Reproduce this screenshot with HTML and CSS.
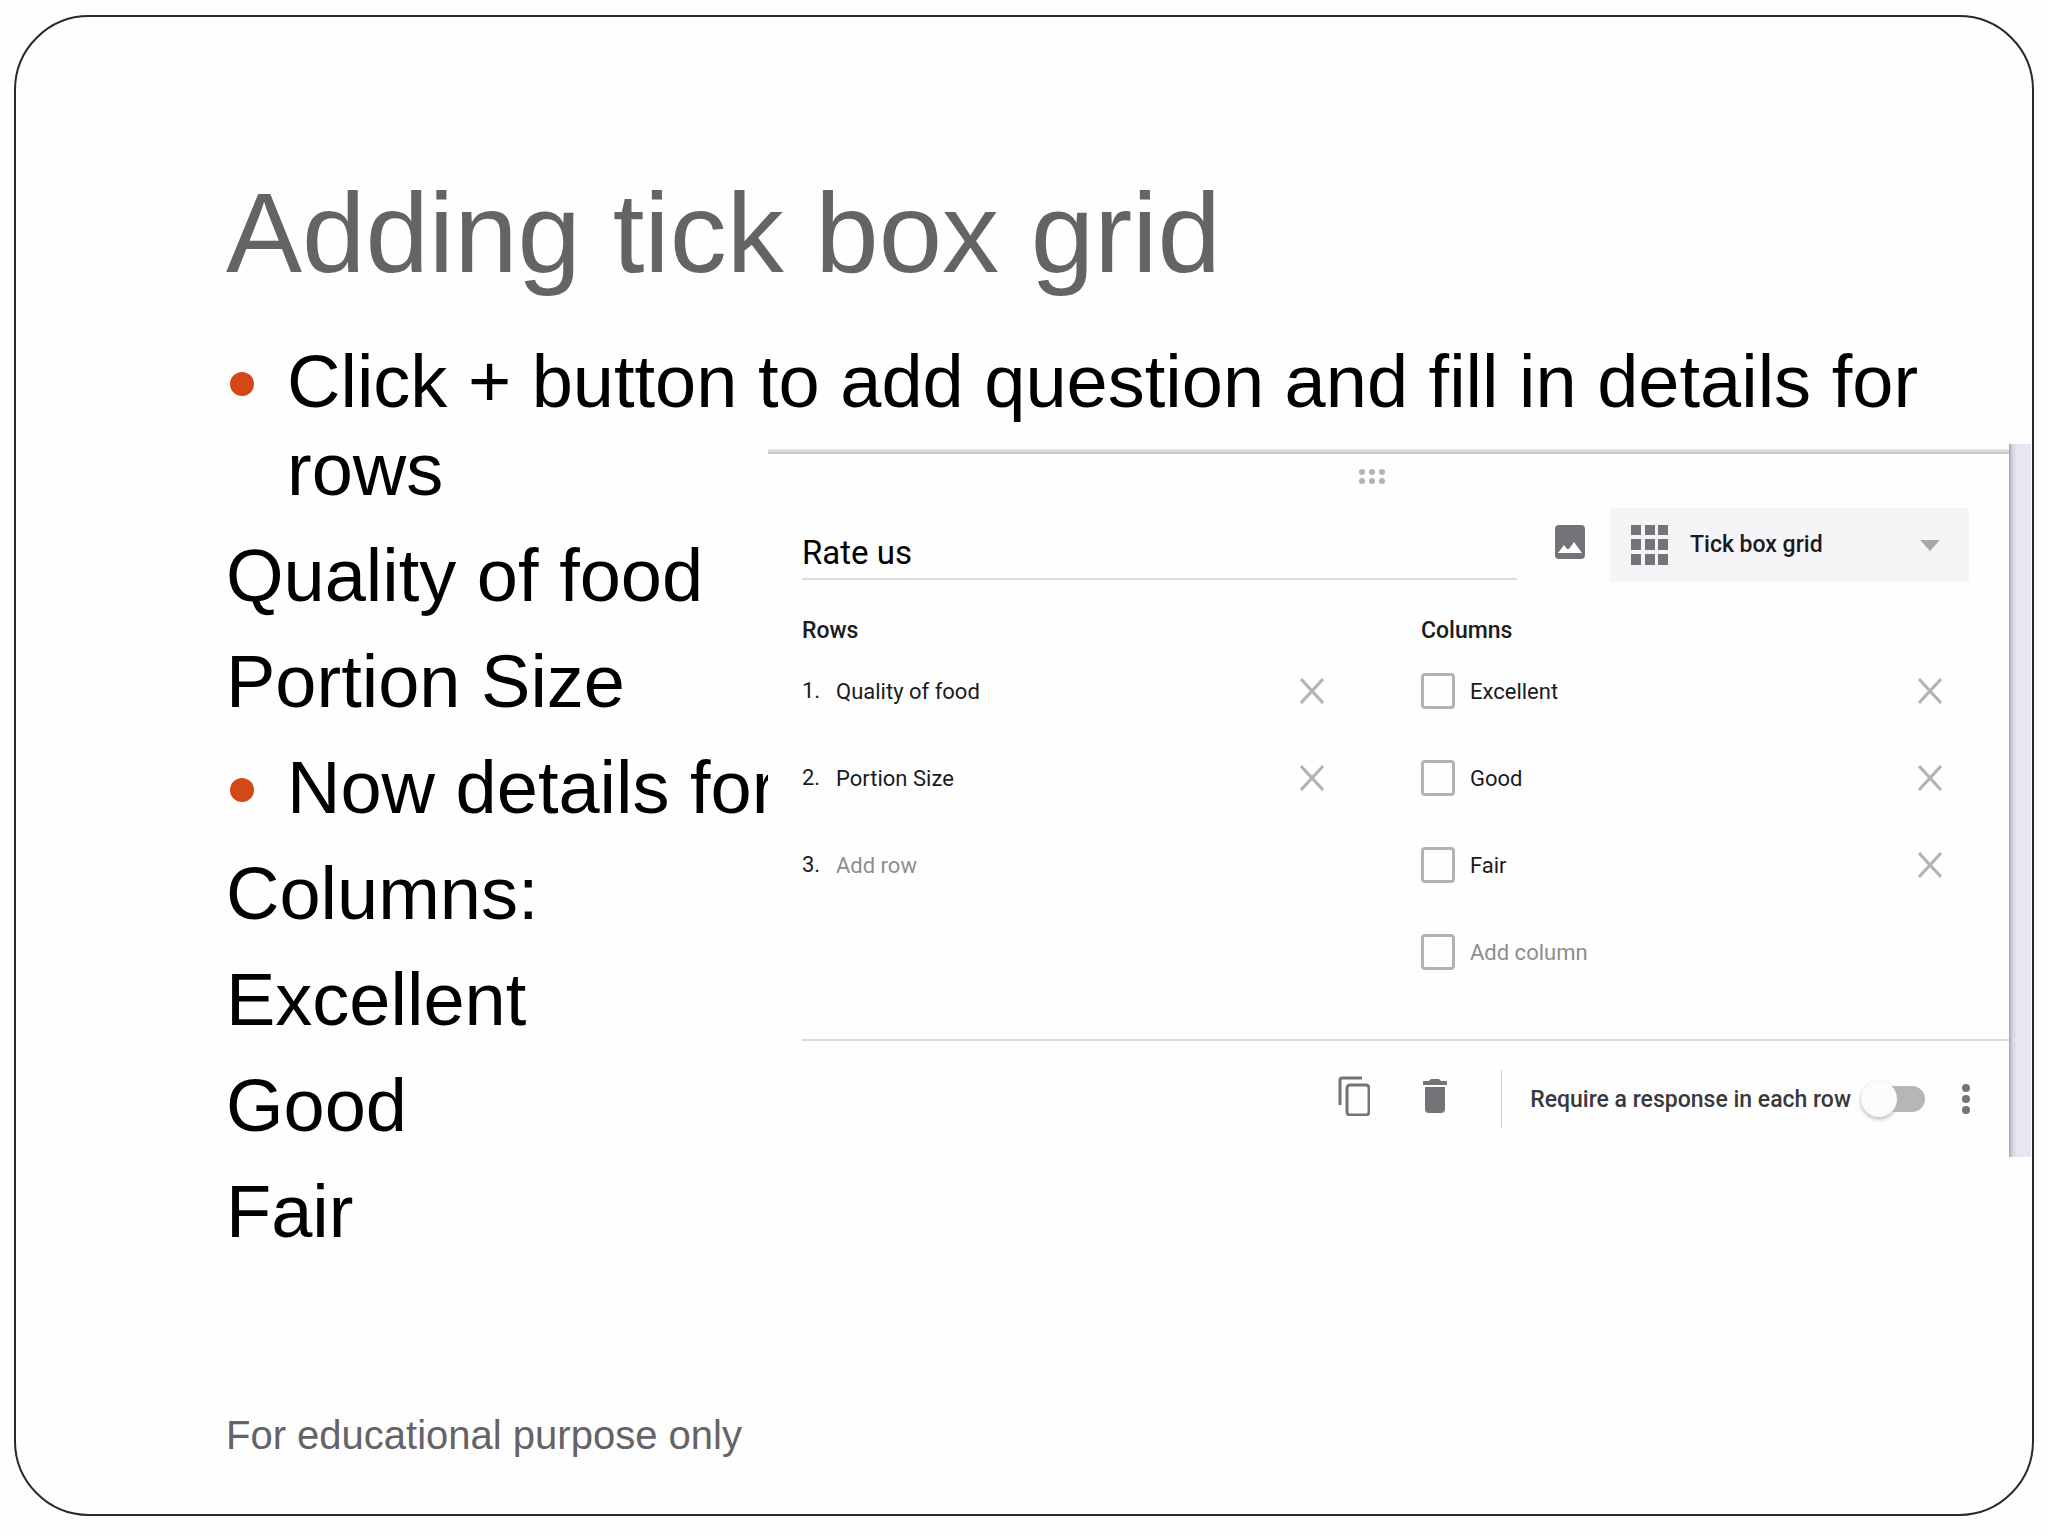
FILE: index.html
```html
<!DOCTYPE html>
<html lang="en">
<head>
<meta charset="utf-8">
<title>Adding tick box grid</title>
<link rel="stylesheet" href="styles.css">
</head>
<body>
<svg class="sprite" aria-hidden="true">
  <symbol id="cross" viewBox="0 0 24 26"><path d="M1 1 L23 25 M23 1 L1 25" fill="none" stroke="#b4b2b5" stroke-width="3"/></symbol>
</svg>
<main class="slide">
  <h1 class="title">Adding tick box grid</h1>
  <div class="points">
    <p class="bullet">Click + button to add question and fill in details for rows</p>
    <p>Quality of food</p>
    <p>Portion Size</p>
    <p class="bullet">Now details for</p>
    <p>Columns:</p>
    <p>Excellent</p>
    <p>Good</p>
    <p>Fair</p>
  </div>
  <footer class="note">For educational purpose only</footer>

  <form class="shot">
    <div class="card">
      <div class="handle">
        <svg width="26" height="16" viewBox="0 0 26 16" fill="#b4b2b5"><circle cx="3" cy="3" r="3"/><circle cx="13" cy="3" r="3"/><circle cx="23" cy="3" r="3"/><circle cx="3" cy="12" r="3"/><circle cx="13" cy="12" r="3"/><circle cx="23" cy="12" r="3"/></svg>
      </div>
      <div class="head">
        <input class="question" type="text" value="Rate us" aria-label="Question">
        <button class="icon image" type="button" aria-label="Add image">
          <svg width="30" height="34" viewBox="0 0 30 34"><rect width="30" height="34" rx="4" fill="#757377"/><path d="M3 28 L9 20 L12 24 L14 24 L19 17 L27 28 Z" fill="#fff"/></svg>
        </button>
        <label class="type">
          <svg width="37" height="40" viewBox="0 0 37 40" fill="#757377"><path d="M0 0h10v10H0zM14 0h10v10H14zM27 0h10v10H27zM0 14h10v11H0zM14 14h10v11H14zM27 14h10v11H27zM0 29h10v11H0zM14 29h10v11H14zM27 29h10v11H27z"/></svg>
          <select aria-label="Question type"><option>Tick box grid</option></select>
          <svg width="20" height="11" viewBox="0 0 20 11"><path d="M0 0h20L10 11z" fill="#a9a7aa"/></svg>
        </label>
      </div>
      <div class="fields">
        <section class="rows">
          <h2>Rows</h2>
          <div class="item"><span class="num">1.</span><input type="text" value="Quality of food" aria-label="Row 1"><button class="icon" type="button" aria-label="Remove row 1"><svg width="24" height="26"><use href="#cross"/></svg></button></div>
          <div class="item"><span class="num">2.</span><input type="text" value="Portion Size" aria-label="Row 2"><button class="icon" type="button" aria-label="Remove row 2"><svg width="24" height="26"><use href="#cross"/></svg></button></div>
          <div class="item"><span class="num">3.</span><input type="text" placeholder="Add row" aria-label="Row 3"></div>
        </section>
        <section class="columns">
          <h2>Columns</h2>
          <div class="item"><input type="checkbox" aria-label="Excellent"><input type="text" value="Excellent" aria-label="Column 1"><button class="icon" type="button" aria-label="Remove column 1"><svg width="24" height="26"><use href="#cross"/></svg></button></div>
          <div class="item"><input type="checkbox" aria-label="Good"><input type="text" value="Good" aria-label="Column 2"><button class="icon" type="button" aria-label="Remove column 2"><svg width="24" height="26"><use href="#cross"/></svg></button></div>
          <div class="item"><input type="checkbox" aria-label="Fair"><input type="text" value="Fair" aria-label="Column 3"><button class="icon" type="button" aria-label="Remove column 3"><svg width="24" height="26"><use href="#cross"/></svg></button></div>
          <div class="item"><input type="checkbox" aria-label="New column"><input type="text" placeholder="Add column" aria-label="Column 4"></div>
        </section>
      </div>
      <div class="actions">
        <button class="icon copy" type="button" aria-label="Duplicate">
          <svg width="32" height="40" viewBox="0 0 32 40" fill="none" stroke="#757377" stroke-width="3"><path d="M24 2H4Q2 2 2 4V29"/><rect x="9" y="9" width="22" height="30" rx="3"/></svg>
        </button>
        <button class="icon delete" type="button" aria-label="Delete">
          <svg width="24" height="34" viewBox="0 0 24 34" fill="#757377"><path d="M0 2h6l2-2h8l2 2h6v4H0zM2 8h20v22q0 4-4 4H6q-4 0-4-4z"/></svg>
        </button>
        <label class="require">Require a response in each row<input class="switch" type="checkbox" role="switch"></label>
        <button class="icon" type="button" aria-label="More options">
          <svg width="8" height="30" viewBox="0 0 8 30" fill="#757377"><circle cx="4" cy="4" r="4"/><circle cx="4" cy="15" r="4"/><circle cx="4" cy="26" r="4"/></svg>
        </button>
      </div>
    </div>
    <div class="edge"></div>
  </form>
</main>
</body>
</html>
```
FILE: styles.css
```css
* { box-sizing: border-box; }

body {
  margin: 0;
  padding: 15px 14px 20px;
  background: #fefefe;
  color: #000;
  font-family: "Liberation Sans", Arial, sans-serif;
}

.sprite { display: none; }
svg { display: block; flex: none; }

.slide {
  position: relative;
  display: flex;
  flex-direction: column;
  min-height: calc(100vh - 35px);
  padding: 148px 80px 55px 210px;
  border: 2px solid #2a282b;
  border-radius: 75px;
}

.title {
  margin: 0;
  color: #656366;
  font-size: 114px;
  font-weight: 400;
  line-height: 136px;
}

.points {
  display: flex;
  flex-direction: column;
  gap: 18px;
  margin-top: 37px;
  font-size: 74px;
  line-height: 88px;
}

.points p { margin: 0; }

.bullet {
  display: grid;
  grid-template-columns: 24px 1fr;
  column-gap: 37px;
}

.bullet::before {
  content: "";
  width: 24px;
  height: 24px;
  margin: 34px 4px 0;
  border-radius: 50%;
  background: #d34817;
}

.note {
  margin-top: auto;
  color: #656366;
  font-size: 40px;
  line-height: 48px;
}

/* Form editor laid over the slide text */
.shot {
  position: absolute;
  top: 427px;
  left: 752px;
  right: 1px;
  display: flex;
  background: #fefefe;
  font-family: Roboto, sans-serif;
  font-size: 22px;
  color: #1c1a1d;
}

.card { flex: 1; min-width: 0; padding-top: 5px; }

.edge {
  width: 22px;
  background: linear-gradient(90deg, #a3a0ac, #d3cfdd 3px, #e9e5f3 8px);
}

.handle {
  display: flex;
  justify-content: center;
  height: 59px;
  padding: 20px 34px 0 0;
  background: linear-gradient(#e9e7ea, #c6c4c8 5px, transparent 5px);
}

.icon {
  display: flex;
  padding: 0;
  border: 0;
  background: none;
}

input, select { font: inherit; color: inherit; }

input[type="text"] {
  min-width: 0;
  flex: 1;
  padding: 2px 0 0;
  border: 0;
  background: none;
}

input::placeholder { color: #8f8d91; opacity: 1; }

.head {
  display: flex;
  height: 74px;
  padding: 0 40px 0 34px;
}

.head input.question {
  align-self: flex-end;
  height: 48px;
  margin-bottom: 2px;
  padding: 0 0 5px;
  border-bottom: 2px solid #dddbdf;
  font-size: 33px;
  color: #000;
}

.image { align-items: center; height: 68px; margin: 0 25px 0 38px; }

.type {
  display: flex;
  align-items: center;
  width: 359px;
  padding: 0 29px 0 21px;
  border-radius: 3px;
  background: #f5f4f6;
}

.type select {
  flex: 1;
  margin-left: 22px;
  padding: 0 0 2px;
  border: 0;
  appearance: none;
  background: none;
  font-size: 23px;
  font-weight: 500;
}

.fields {
  display: grid;
  grid-template-columns: 619fr 588fr;
  padding-left: 34px;
}

.rows { padding-right: 97px; }
.columns { padding-right: 67px; }

.fields h2 {
  margin: 0;
  padding-top: 32px;
  font-size: 23px;
  font-weight: 500;
  line-height: 33px;
}

.item {
  display: flex;
  align-items: center;
  height: 87px;
}

.num { width: 34px; }

.item input[type="checkbox"] {
  appearance: none;
  width: 34px;
  height: 36px;
  margin: 0 15px 0 0;
  border: 3px solid #b4b2b5;
  border-radius: 4px;
}

.actions {
  display: flex;
  align-items: center;
  justify-content: flex-end;
  height: 118px;
  margin: 44px 0 0 34px;
  padding-right: 39px;
  border-top: 2px solid #dddbdf;
}

.copy { margin-right: 53px; padding-bottom: 6px; }
.delete { margin-right: 54px; padding-bottom: 6px; }

.require {
  display: flex;
  align-items: center;
  height: 58px;
  margin-right: 37px;
  padding-left: 28px;
  border-left: 1px solid #d3d1d5;
  font-size: 23px;
  font-weight: 500;
  color: #3a383c;
}

.switch {
  appearance: none;
  display: flex;
  align-items: center;
  width: 56px;
  height: 26px;
  margin: 0 0 0 18px;
  border-radius: 13px;
  background: #b7b5b8;
}

.switch::before {
  content: "";
  flex: none;
  width: 36px;
  height: 36px;
  margin-left: -8px;
  border-radius: 50%;
  background: #fcfafd;
  box-shadow: 0 2px 4px #b7b5b8;
}
```
